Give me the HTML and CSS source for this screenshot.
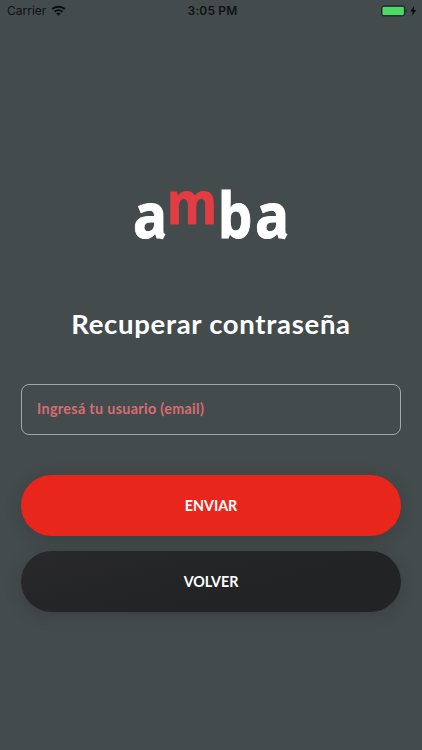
FILE: index.html
```
<!DOCTYPE html>
<html lang="es">
<head>
<meta charset="utf-8">
<title>Recuperar contraseña</title>
<link rel="stylesheet" href="styles.css">
</head>
<body>
<header class="status">
  <div class="carrier"><span>Carrier</span>
    <svg class="wifi" viewBox="0 0 15 11" width="15" height="11" fill="none" stroke="#0b0d0d" stroke-width="2">
      <path d="M1.1 4.1C4.7.9 10.3.9 13.9 4.1M3.5 6.7C5.8 4.7 9.2 4.7 11.5 6.7"/>
      <path d="M5.3 8.3Q7.5 6.8 9.7 8.3L7.5 10.7Z" fill="#0b0d0d" stroke="none"/>
    </svg>
  </div>
  <div class="clock">3:05 PM</div>
  <div class="power">
    <svg viewBox="0 0 37 12" width="37" height="12">
      <rect x=".6" y=".9" width="23.2" height="10" rx="2.2" fill="none" stroke="#1d2421" stroke-width="1"/>
      <rect x="1.6" y="1.9" width="21.2" height="8" rx="1.2" fill="#4cd964"/>
      <path d="M25 4.3q1.6 1.6 0 3.2Z" fill="#1d2421"/>
      <path d="M33.2 1.1 29.4 6.6h2.4L30.9 10.7 35.3 5.1h-2.6Z" fill="#080909"/>
    </svg>
  </div>
</header>
<main class="screen">
  <svg class="logo" viewBox="0 0 160 60" width="160" height="60" role="img" aria-label="amba">
    <g class="wordmark">
      <text x="2" y="53" textLength="34" lengthAdjust="spacingAndGlyphs">a</text>
      <text class="accent" x="36" y="38.5" textLength="50" lengthAdjust="spacingAndGlyphs">m</text>
      <text class="tall" x="87" y="53" textLength="34.5" lengthAdjust="spacingAndGlyphs">b</text>
      <text x="124" y="53" textLength="34" lengthAdjust="spacingAndGlyphs">a</text>
      <path d="M24 45H31.8Q31.8 48 34.6 49.2L31.4 54.5Q26.5 53 24.5 49ZM146 45H153.8Q153.8 48 156.6 49.2L153.4 54.5Q148.5 53 146.5 49Z"/>
    </g>
  </svg>
  <h1 class="title">Recuperar contraseña</h1>
  <form class="form">
    <div class="field"><span>Ingresá tu usuario (email)</span></div>
    <button class="button primary" type="button"><span>ENVIAR</span></button>
    <button class="button secondary" type="button"><span>VOLVER</span></button>
  </form>
</main>
</body>
</html>
```

FILE: styles.css
```
* { box-sizing: border-box; }
body {
  margin: 0;
  height: 750px;
  overflow: hidden;
  background: #444b4c;
  color: #fff;
  font-family: Lato, sans-serif;
}
.status {
  display: grid;
  grid-template-columns: 1fr auto 1fr;
  align-items: center;
  height: 22px;
  padding: 0 4px 0 7px;
  color: #101313;
  font: 12px/22px Inter, sans-serif;
}
.carrier { display: flex; align-items: center; gap: 5px; }
.wifi { margin-top: -2px; }
.clock { font-weight: 600; letter-spacing: .15px; }
.power { display: flex; justify-content: flex-end; }
.screen {
  display: flex;
  flex-direction: column;
  align-items: stretch;
  padding: 163px 21px 0;
}
.logo { align-self: center; overflow: visible; }
.wordmark { font: 700 62px "Noto Sans", sans-serif; fill: #fff; stroke: #fff; stroke-width: .9px; }
.wordmark path { stroke: none; }
.tall { font-size: 62px; }
.accent { fill: #e23d43; stroke: #e23d43; font-size: 60px; }
.title {
  margin: 59px 0 0;
  text-align: center;
  font-size: 27.5px;
  line-height: 40px;
  font-weight: 700;
  letter-spacing: .7px;
}
.form { display: flex; flex-direction: column; margin-top: 40px; }
.field {
  height: 51px;
  border: 1px solid #a2a6a7;
  border-radius: 8px;
  padding: 0 15px;
  line-height: 48px;
  font-size: 14.3px;
  font-weight: 700;
  letter-spacing: .35px;
  color: #da6b72;
}
.button {
  border: 0;
  border-radius: 31px;
  height: 61px;
  padding: 0;
  color: #fff;
  font: 700 14.3px/60px Lato, sans-serif;
  box-shadow: 0 3px 16px rgba(35, 38, 39, .28);
}
.primary { margin-top: 40px; background: #e8261b; }
.secondary { margin-top: 15px; background: linear-gradient(165deg, #29292b, #222325 60%); }
```
